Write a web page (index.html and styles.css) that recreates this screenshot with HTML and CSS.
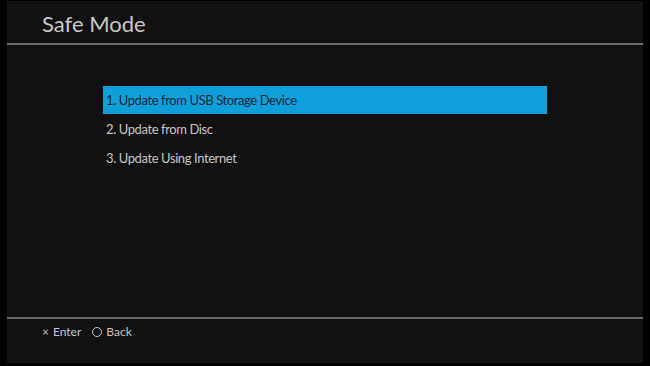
FILE: index.html
```html
<!DOCTYPE html>
<html lang="en">
<head>
    <meta charset="UTF-8">
    <title>Safe Mode</title>
    <link rel="stylesheet" href="styles.css">
</head>
<body>
    <div class="screen">
        <div class="top">
            <h1 class="title">Safe Mode</h1>
        </div>
        <div class="main">
            <ul class="menu">
                <li class="item sel">1. Update from USB Storage Device</li>
                <li class="item">2. Update from Disc</li>
                <li class="item">3. Update Using Internet</li>
            </ul>
        </div>
        <div class="bottom">
            <span class="key"><span class="cross">×</span>Enter</span>
            <span class="key"><span class="circle"></span>Back</span>
        </div>
    </div>
</body>
</html>
```

FILE: styles.css
```css
html, body {
    margin: 0;
    padding: 0;
    background: #000;
}
.screen {
    margin: 1px 7px 0 7px;
    height: 362px;
    background: #111111;
    display: flex;
    flex-direction: column;
    font-family: Lato, "Open Sans", sans-serif;
    color: #c4c4c4;
}
.top {
    height: 42px;
    border-bottom: 2px solid #6a6a6a;
    padding-left: 35px;
    display: flex;
    align-items: center;
}
.title {
    margin: 2px 0 0 0;
    font-size: 22px;
    font-weight: normal;
    color: #c8c8c8;
}
.main {
    flex: 1;
}
.menu {
    list-style: none;
    margin: 41px 0 0 96px;
    padding: 0;
    width: 444px;
    display: flex;
    flex-direction: column;
    gap: 1px;
}
.item {
    height: 28px;
    line-height: 28px;
    padding-left: 3px;
    font-size: 13px;
    letter-spacing: -0.4px;
}
.sel {
    background: #0fa0da;
    color: #10283a;
}
.bottom {
    height: 44px;
    border-top: 2px solid #6a6a6a;
    padding-left: 35px;
    display: flex;
    align-items: flex-start;
    gap: 11px;
    font-size: 12px;
}
.key {
    display: flex;
    align-items: center;
    gap: 4px;
    margin-top: 5px;
}
.cross {
    font-size: 12px;
}
.circle {
    width: 8px;
    height: 8px;
    border: 1.5px solid #c4c4c4;
    border-radius: 50%;
}
```
